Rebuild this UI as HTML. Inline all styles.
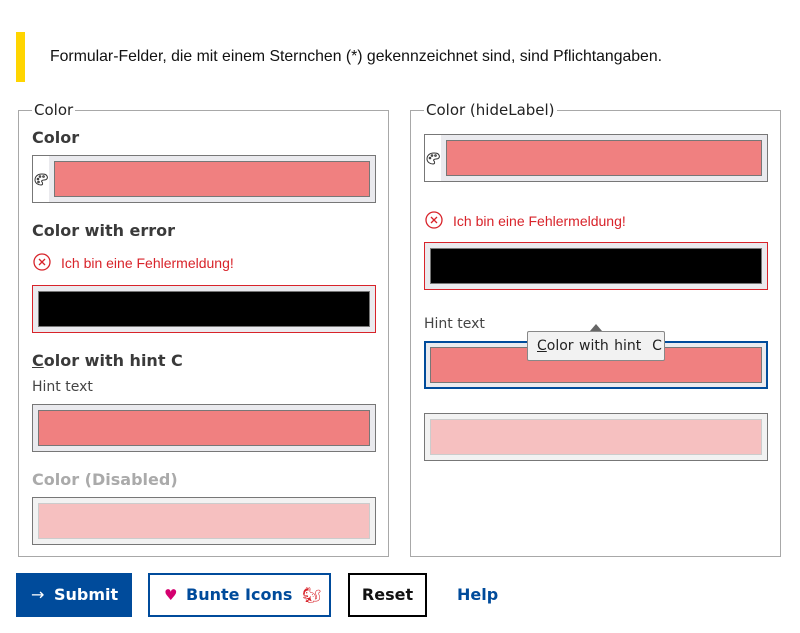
<!DOCTYPE html>
<html><head><style>
body{margin:0;width:800px;height:633px;background:#fff;position:relative;font-family:"DejaVu Sans",Verdana,sans-serif;color:#333;overflow:hidden}
.a{position:absolute}
.fs{position:absolute;border:1px solid #a8a8a8;top:110px;height:445px;width:369px}
.lg{position:absolute;background:#fff;padding:0 2px;font-size:15px;color:#222;top:101px}
.lbl{position:absolute;font-weight:bold;font-size:16px;color:#3a3a3a;line-height:20px}
.box{position:absolute;border:1px solid #777;background:#eaeaee;height:48px;width:344px;box-sizing:border-box}
.sw{position:absolute;top:5px;left:5px;right:5px;bottom:5px;border:1px solid #777;background:#f08080}
.err{position:absolute;font-family:"Liberation Sans",Arial,sans-serif;font-size:14px;color:#d8232a;line-height:16px}
.hint{position:absolute;font-size:14px;color:#444}
.ic{position:absolute;left:0;top:0;width:16px;height:46px;background:#fff}
</style></head><body>
<div class="a" style="left:16px;top:32px;width:9px;height:50px;background:#ffd500"></div>
<div class="a" style="left:50px;top:48px;font-family:'Liberation Sans',Arial,sans-serif;font-size:15.8px;color:#111">Formular-Felder, die mit einem Sternchen (*) gekennzeichnet sind, sind Pflichtangaben.</div>

<div class="fs" style="left:18px"></div>
<div class="lg" style="left:32px">Color</div>
<div class="lbl" style="left:32px;top:128px">Color</div>
<div class="box" style="left:32px;top:155px"><div class="ic"><svg width="16" height="46"><g fill="none" stroke="#333" stroke-width="1"><path d="M9 18 C4 18 2 21 2 24 C2 27 5 29 8 29 C10 29 10 27 9 26 C8 25 9 24 11 24 C14 24 15 22 14 20 C13 18 11 18 9 18Z"/><circle cx="5" cy="23" r=".8"/><circle cx="7" cy="20.5" r=".8"/><circle cx="10.5" cy="20.5" r=".8"/><circle cx="5.5" cy="26" r=".8"/></g></svg></div><div class="sw" style="left:21px"></div></div>

<div class="lbl" style="left:32px;top:221px">Color with error</div>
<svg class="a" style="left:33px;top:253px" width="18" height="18"><circle cx="9" cy="9" r="8" fill="none" stroke="#d8232a" stroke-width="1.3"/><path d="M6 6L12 12M12 6L6 12" stroke="#d8232a" stroke-width="1.3"/></svg>
<div class="err" style="left:61px;top:255px">Ich bin eine Fehlermeldung!</div>
<div class="box" style="left:32px;top:285px;border-color:#d8232a"><div class="sw" style="background:#000"></div></div>

<div class="lbl" style="left:32px;top:351px"><u>C</u>olor with hint C</div>
<div class="hint" style="left:32px;top:379px">Hint text</div>
<div class="box" style="left:32px;top:404px"><div class="sw"></div></div>

<div class="lbl" style="left:32px;top:470px;color:#aaa">Color (Disabled)</div>
<div class="box" style="left:32px;top:497px;background:#f2f2f2"><div class="sw" style="background:#f6c0c0;border-color:#ccc"></div></div>

<div class="fs" style="left:410px"></div>
<div class="lg" style="left:424px">Color (hideLabel)</div>
<div class="box" style="left:424px;top:134px"><div class="ic"><svg width="16" height="46"><g fill="none" stroke="#333" stroke-width="1"><path d="M9 18 C4 18 2 21 2 24 C2 27 5 29 8 29 C10 29 10 27 9 26 C8 25 9 24 11 24 C14 24 15 22 14 20 C13 18 11 18 9 18Z"/><circle cx="5" cy="23" r=".8"/><circle cx="7" cy="20.5" r=".8"/><circle cx="10.5" cy="20.5" r=".8"/></g></svg></div><div class="sw" style="left:21px"></div></div>
<svg class="a" style="left:425px;top:211px" width="18" height="18"><circle cx="9" cy="9" r="8" fill="none" stroke="#d8232a" stroke-width="1.3"/><path d="M6 6L12 12M12 6L6 12" stroke="#d8232a" stroke-width="1.3"/></svg>
<div class="err" style="left:453px;top:213px">Ich bin eine Fehlermeldung!</div>
<div class="box" style="left:424px;top:242px;border-color:#d8232a"><div class="sw" style="background:#000"></div></div>
<div class="hint" style="left:424px;top:316px">Hint text</div>
<div class="box" style="left:424px;top:341px;border:2px solid #004b9b;height:48px;width:344px"><div class="sw" style="top:4px;left:4px;right:4px;bottom:4px"></div></div>
<div class="box" style="left:424px;top:413px;background:#f2f2f2"><div class="sw" style="background:#f6c0c0;border-color:#ccc"></div></div>

<div class="a" style="left:590px;top:324px;width:0;height:0;border-left:6px solid transparent;border-right:6px solid transparent;border-bottom:7px solid #666"></div>
<div class="a" style="left:527px;top:331px;width:136px;height:28px;background:#f2f2f2;border:1px solid #888;border-radius:2px;font-size:14px;color:#222;line-height:28px;text-indent:9px;word-spacing:1px"><u>C</u>olor with hint&nbsp; C</div>

<div class="a" style="left:16px;top:573px;width:116px;height:44px;background:#004b9b;color:#fff;font-weight:bold;font-size:16px;line-height:44px"><span style="position:absolute;left:15px;font-weight:normal">→</span><span style="position:absolute;left:38px">Submit</span></div>
<div class="a" style="left:148px;top:573px;width:179px;height:40px;border:2px solid #004b9b;color:#004b9b;font-weight:bold;font-size:16px;line-height:40px"><span style="position:absolute;left:14px;color:#d4006f;font-size:15px">♥</span><span style="position:absolute;left:36px">Bunte Icons</span><span style="position:absolute;left:152px;color:#d8232a;font-weight:normal;font-size:15px">🐿</span></div>
<div class="a" style="left:348px;top:573px;width:75px;height:40px;border:2px solid #000;color:#111;font-weight:bold;font-size:16px;line-height:40px;text-align:center">Reset</div>
<div class="a" style="left:457px;top:573px;height:44px;color:#004b9b;font-weight:bold;font-size:16px;line-height:44px">Help</div>
</body></html>
